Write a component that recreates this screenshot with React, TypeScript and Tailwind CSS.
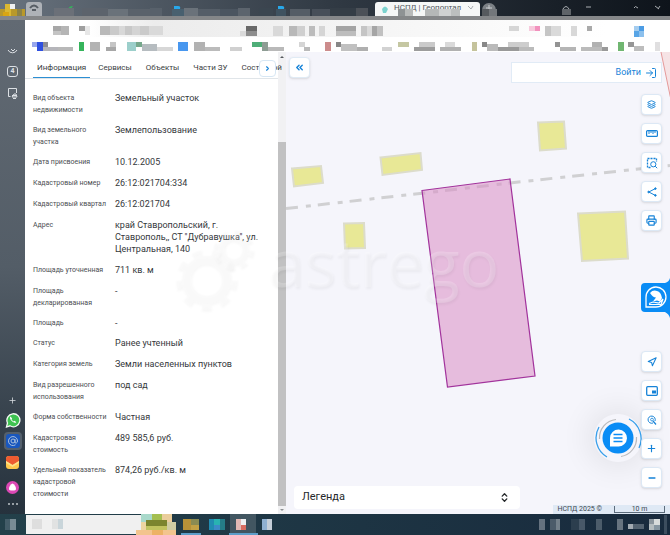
import type { ReactNode } from "react";
import { ChevronRight, ChevronsLeft, ChevronsUpDown, Layers, LogIn, Minus, Navigation, Plus, Printer, Share2 } from "lucide-react";

type Block = [x: number, y: number, w: number, h: number, color: string];

const tabBlocks: Block[] = [
    [0, 9, 25, 7, "#b9992a"], [5, 4, 6, 12, "#dbb832"], [10, 4, 5, 5, "#f0f1f2"], [3, 12, 6, 5, "#d9a512"], [17, 9, 5, 7, "#8c8246"],
    [54, 8, 20, 8, "#6b7078"], [82, 8, 26, 8, "#5c636c"], [108, 9, 20, 7, "#6a727a"], [128, 9, 22, 7, "#5a626b"],
    [150, 8, 12, 8, "#58616b"], [172, 9, 12, 7, "#48606f"], [184, 8, 14, 8, "#6a727a"], [198, 9, 22, 7, "#555e68"], [220, 9, 18, 7, "#4b5560"], [238, 8, 12, 8, "#5c646d"],
    [259, 8, 14, 8, "#3b4650"], [276, 9, 10, 7, "#3f5260"], [290, 9, 20, 7, "#555d66"], [312, 9, 18, 7, "#474f59"], [330, 8, 26, 8, "#343d46"], [356, 8, 12, 8, "#4c5158"],
    [398, 9, 7, 7, "#8e9294"], [405, 9, 8, 7, "#b8baba"], [425, 9, 14, 7, "#b5b8b8"], [439, 9, 12, 7, "#cfd1d1"], [451, 9, 9, 7, "#bcbfbf"],
    [482, 9, 7, 7, "#565a5e"], [489, 9, 8, 7, "#73777b"], [562, 9, 9, 6, "#5e6368"],
];

const toolbarBlocks: Block[] = [
    [53, 26, 8, 5, "#a7a7a7"], [61, 26, 8, 9, "#b5b5b5"], [53, 31, 8, 4, "#c4c4c4"], [79, 26, 6, 5, "#9e9e9e"], [85, 26, 5, 9, "#e7e7e7"],
    [100, 26, 10, 9, "#b9b9b9"], [110, 26, 9, 9, "#cacaca"], [119, 26, 6, 9, "#d8d8d8"], [125, 26, 7, 9, "#c8c8c8"], [132, 26, 8, 9, "#d4d4d4"], [140, 26, 9, 9, "#cacaca"], [149, 26, 14, 9, "#d9d9d9"],
    [240, 31, 6, 5, "#dadada"], [246, 26, 11, 5, "#686868"], [246, 31, 11, 5, "#8d8d8d"], [273, 26, 10, 10, "#d9d9d9"], [289, 26, 8, 10, "#b8b8b8"], [297, 26, 8, 10, "#cfcfcf"], [309, 26, 6, 10, "#bcbcbc"], [319, 26, 6, 10, "#d5d5d5"],
    [336, 26, 20, 5, "#a4a4a4"], [336, 31, 20, 5, "#bdbdbd"], [361, 26, 6, 10, "#c5c5c5"], [367, 26, 5, 10, "#dadada"], [372, 26, 5, 10, "#a5a5a5"], [377, 26, 6, 10, "#c1c1c1"],
    [509, 26, 10, 5, "#d6d6d6"], [529, 26, 6, 5, "#f7cadd"], [535, 26, 5, 5, "#f291bd"], [545, 26, 6, 10, "#c5c5c5"], [551, 26, 10, 10, "#dadada"], [571, 26, 6, 10, "#d8d8d8"], [587, 26, 5, 5, "#aaaaaa"],
    [634, 26, 5, 5, "#a5cdef"], [639, 26, 5, 5, "#4c9ce4"], [634, 31, 5, 6, "#58a5e6"], [639, 31, 5, 6, "#8cc0ed"],
    [32, 42, 5, 5, "#98a7ed"], [37, 42, 6, 9, "#2f50e0"], [43, 42, 5, 5, "#8e8e94"], [43, 47, 15, 4, "#b5b5ba"], [58, 47, 15, 4, "#b8b8b8"], [79, 42, 5, 9, "#35b45b"], [90, 42, 10, 9, "#b3b3b3"], [106, 47, 10, 4, "#a7a7a7"], [110, 42, 6, 5, "#c5c5c5"],
    [127, 42, 9, 9, "#9ccfcb"], [136, 42, 6, 5, "#76a88c"], [142, 44, 15, 7, "#b6bcc0"], [157, 47, 16, 4, "#d7d7d7"], [178, 42, 10, 9, "#4897ef"], [194, 42, 11, 9, "#b2b2b2"], [205, 47, 15, 4, "#bbbbbb"], [230, 47, 12, 4, "#d0d0d0"],
    [252, 42, 10, 5, "#4fae78"], [262, 42, 6, 9, "#8e9d94"], [268, 47, 16, 4, "#b9b9b9"], [299, 42, 6, 5, "#d5d5d5"], [304, 47, 6, 4, "#bababa"], [325, 42, 6, 9, "#cc8c8c"], [336, 42, 5, 5, "#878787"], [341, 44, 16, 7, "#c0c0c0"], [357, 47, 11, 4, "#afafaf"], [382, 47, 10, 4, "#d2d2d2"],
    [398, 42, 11, 5, "#c5c7a2"], [414, 47, 21, 4, "#9c9c9c"], [419, 42, 16, 5, "#cacaca"], [440, 47, 21, 4, "#b1b1b1"], [445, 42, 10, 5, "#dadada"], [472, 42, 5, 9, "#c5c39c"], [482, 42, 5, 5, "#888888"], [487, 44, 11, 7, "#bababa"], [498, 47, 21, 4, "#999999"], [508, 42, 21, 5, "#cdcdcd"], [519, 47, 15, 4, "#bbbbbb"],
    [555, 42, 5, 5, "#939393"], [560, 47, 16, 4, "#b5b5b5"], [581, 47, 21, 4, "#bbbbbb"], [592, 42, 10, 5, "#b1b1b1"], [602, 47, 6, 4, "#999999"], [618, 42, 6, 9, "#70b671"], [628, 42, 6, 5, "#969696"], [634, 46, 10, 5, "#bdbdbd"], [655, 42, 5, 9, "#e0dfe0"],
];

const taskbarBlocks: Block[] = [
    [5, 5, 5, 11, "#435c68"], [10, 5, 6, 11, "#788b94"], [26, 1, 115, 19, "#f0f0f0"], [32, 5, 10, 10, "#dedede"], [52, 5, 6, 10, "#e1e2e2"], [58, 5, 5, 10, "#c9d5da"],
    [136, 16, 40, 5, "#f3c48e"], [141, 0, 11, 8, "#a9d9cb"], [152, 0, 10, 6, "#a4bf51"], [162, 0, 10, 8, "#eacd9b"], [146, 6, 21, 6, "#7b852e"], [141, 8, 5, 8, "#eed5a0"], [146, 12, 21, 4, "#c1c35e"], [167, 8, 9, 8, "#cecca3"], [152, 16, 11, 5, "#edb265"],
    [183, 5, 8, 11, "#b69138"], [191, 5, 8, 6, "#8a8b52"], [191, 11, 8, 5, "#c2a145"], [209, 5, 5, 11, "#218cb1"], [214, 5, 6, 6, "#29b3b2"], [214, 11, 6, 5, "#3c8bc8"], [220, 5, 5, 11, "#257c87"],
    [230, 0, 26, 21, "#425661"], [236, 5, 5, 11, "#e2b8b4"], [241, 5, 5, 6, "#eef0f1"], [241, 11, 5, 5, "#d86c60"], [262, 5, 5, 11, "#8fb0d1"], [267, 5, 5, 11, "#c5ced8"],
    [181, 19, 20, 2, "#5d9ec9"], [229, 19, 29, 2, "#5d9ec9"],
];

const trayBlocks: Block[] = [
    [9, 5, 6, 11, "#65727f"], [20, 5, 6, 11, "#4c5b6a"], [26, 5, 4, 11, "#74808b"], [41, 5, 8, 11, "#2c3e4e"], [49, 5, 6, 11, "#485868"], [66, 5, 6, 11, "#4c5c6a"],
    [87, 5, 6, 11, "#677480"], [98, 10, 5, 5, "#a3abb2"], [103, 10, 11, 5, "#546371"], [119, 5, 5, 5, "#8b969e"], [124, 5, 6, 6, "#d8dcdc"], [119, 10, 5, 6, "#b5bdc0"], [124, 11, 6, 5, "#8797a2"], [134, 1, 3, 19, "#3c4d5e"],
];

const tabs = ["Информация", "Сервисы", "Объекты", "Части ЗУ", "Составной"];

const details = [
    { label: "Вид объекта недвижимости", value: "Земельный участок" },
    { label: "Вид земельного участка", value: "Землепользование" },
    { label: "Дата присвоения", value: "10.12.2005" },
    { label: "Кадастровый номер", value: "26:12:021704:334" },
    { label: "Кадастровый квартал", value: "26:12:021704" },
    { label: "Адрес", value: "край Ставропольский, г. Ставрополь,, СТ \"Дубравушка\", ул. Центральная, 140" },
    { label: "Площадь уточненная", value: "711 кв. м" },
    { label: "Площадь декларированная", value: "-" },
    { label: "Площадь", value: "-" },
    { label: "Статус", value: "Ранее учтенный" },
    { label: "Категория земель", value: "Земли населенных пунктов" },
    { label: "Вид разрешенного использования", value: "под сад" },
    { label: "Форма собственности", value: "Частная" },
    { label: "Кадастровая стоимость", value: "489 585,6 руб." },
    { label: "Удельный показатель кадастровой стоимости", value: "874,26 руб./кв. м" },
];

function Mosaic({ blocks, box, className }: { blocks: Block[]; box: string; className: string }) {
    return (
        <svg className={className} viewBox={box} preserveAspectRatio="none" shapeRendering="crispEdges" aria-hidden="true">
            {blocks.map(([x, y, w, h, color], index) => (
                <rect key={index} x={x} y={y} width={w} height={h} fill={color} />
            ))}
        </svg>
    );
}

function MapButton({ label, children }: { label: string; children: ReactNode }) {
    return (
        <button aria-label={label} className="flex size-[21px] items-center justify-center rounded-sm border border-[#dce8f5] bg-white text-[#1683d8] shadow-sm">
            {children}
        </button>
    );
}

function BrowserTabs() {
    return (
        <header className="relative h-5 shrink-0 overflow-hidden border-b-4 border-[#858789] bg-linear-to-r from-[#69737e] via-[#303943] to-[#0e141b]">
            <svg className="absolute inset-0 size-full" viewBox="0 0 670 16" preserveAspectRatio="none" aria-hidden="true">
                <rect x="26" y="2" width="16" height="18" rx="3" fill="#aeb2b7" />
                <path d="M30 8q4-5 8 0M32 10h4" fill="none" stroke="#575d64" strokeWidth="2" />
                <path d="M68 9q1-3 5-3l-2 3z" fill="#35b45b" />
                <path d="M174 9V6h4q3 0 2 3z" fill="#28a8ea" />
                <path d="M278 9V6h4q3 0 2 3z" fill="#28a8ea" />
                <rect x="375" y="2" width="105" height="18" rx="3" fill="#f5f7f7" />
                <path d="M382 9q3-5 6 0l-2 4h-3z" fill="#7cd3cf" />
                <circle cx="489" cy="10" r="7" fill="#7c8186" />
                <path d="M486 8h6M489 5v6" stroke="#c9cccf" />
                <path d="M563 9q3-5 6 0M586 7h5M634 8q1-3 4 0M655 6l4 3M660 6l-2 3M468 6l3 3M473 6l-2 3" fill="none" stroke="#a9adb1" />
            </svg>
            <span className="absolute left-[394px] top-0.5 text-[8px] leading-3 text-[#50565c]">НСПД | Геопортал</span>
            <Mosaic blocks={tabBlocks} box="0 0 670 16" className="absolute inset-0 size-full" />
        </header>
    );
}

function BrowserSidebar() {
    return (
        <nav className="flex w-[25px] shrink-0 flex-col items-center bg-linear-to-b from-[#626a73] via-[#535d67] to-[#26323d] pt-6 text-[#dce0e4]">
            <svg className="h-5 w-[25px]" viewBox="0 0 25 20" fill="none" stroke="currentColor" aria-hidden="true">
                <path d="M8 6a5 5 0 0 0 9 0M11 5l2 2 2-2" />
            </svg>
            <button aria-label="Открытые вкладки" className="mt-0.5 flex size-[11px] items-center justify-center rounded-[3px] border border-current text-[7px] leading-none font-bold">4</button>
            <svg className="mt-2 h-4 w-[25px]" viewBox="0 0 25 16" fill="none" stroke="currentColor" aria-hidden="true">
                <path d="M10.500 11.500h-2V3.500h8V8" />
                <path d="M12 10.500h5M13 13.500h3M12 12l2-3h2l1 3z" />
            </svg>
            <div className="mt-auto flex flex-col items-center gap-1 pb-1">
                <button aria-label="Добавить" className="flex h-4 items-center"><Plus size={9} strokeWidth={2} /></button>
                <button aria-label="WhatsApp">
                    <svg className="size-4" viewBox="0 0 16 16">
                        <path d="M1.500 15l1-4A6.500 6.500 0 1 1 5 13.800z" fill="#3fc351" stroke="#f4faf5" strokeWidth="1.300" />
                        <path d="M5.500 4.500c-1 .8-.5 2.800 1.300 4.600s3.600 2.200 4.500 1.100l-1.700-1.500-1 .8c-1-.5-1.600-1.200-2.100-2.200l.7-.8z" fill="#fff" />
                    </svg>
                </button>
                <button aria-label="Mail" className="flex size-[18px] items-center justify-center rounded bg-[#54606d]">
                    <svg className="size-3.5" viewBox="0 0 14 14">
                        <rect width="14" height="14" rx="3" fill="#1957be" />
                        <circle cx="7" cy="7" r="2" fill="none" stroke="#a9bfdc" />
                        <path d="M9 5v3q0 1.500 1.300 1T11.500 7A4.500 4.500 0 1 0 9.500 10.800" fill="none" stroke="#a9bfdc" />
                    </svg>
                </button>
                <button aria-label="Почта" className="py-0.5">
                    <svg className="size-[13px]" viewBox="0 0 13 13">
                        <rect width="13" height="13" rx="3" fill="#ffc84c" />
                        <path d="M0 5V3q0-3 3-3h7q3 0 3 3v2L6.500 9z" fill="#ee5b31" />
                        <path d="M0 5l6.500 4L13 5v2l-6.500 4L0 7z" fill="#ffe089" />
                    </svg>
                </button>
                <button aria-label="Алиса" className="pt-1.5">
                    <svg className="size-[13px]" viewBox="0 0 13 13">
                        <circle cx="6.500" cy="6.500" r="6.500" fill="#dc48b4" />
                        <path d="M6.500 2.500C4 3.500 3 6 3 8q0 1.500 3.500 1.500T10 8c0-2-1-4.500-3.500-5.500z" fill="#fff" />
                    </svg>
                </button>
                <button aria-label="Ещё" className="flex h-3 items-center gap-0.5">
                    <i className="size-0.5 rounded-full bg-[#bcc3c9]" /><i className="size-0.5 rounded-full bg-[#bcc3c9]" /><i className="size-0.5 rounded-full bg-[#bcc3c9]" />
                </button>
            </div>
        </nav>
    );
}

function InfoPanel() {
    return (
        <section className="flex w-[261px] shrink-0 bg-white">
            <div className="flex min-w-0 flex-1 flex-col">
                <div className="relative flex h-[27px] shrink-0 items-end border-b border-[#e0e5e9] pl-2">
                    <button className="mr-2 h-5 border-b border-[#2c8fd3] px-1 text-[8px] whitespace-nowrap text-[#3a3e42]">{tabs[0]}</button>
                    <div className="flex gap-3.5">
                        {tabs.slice(1).map((tab) => (
                            <button key={tab} className="h-5 border-b border-transparent text-[8px] whitespace-nowrap text-[#3a3e42]">{tab}</button>
                        ))}
                    </div>
                    <button aria-label="Следующие вкладки" className="absolute right-0.5 bottom-px flex size-[17px] items-center justify-center rounded-sm border border-[#d7e7f4] bg-white text-[#1683d8]">
                        <ChevronRight size={7} strokeWidth={4} />
                    </button>
                </div>
                <dl className="flex flex-col gap-2 pt-[13px] pl-2">
                    {details.map((item) => (
                        <div key={item.label} className="flex">
                            <dt className="w-[82px] shrink-0 pr-2 text-[7px] leading-3 text-[#4b4e52]">{item.label}</dt>
                            <dd className={item.value === "-" ? "flex-1 text-[9px] leading-3 text-[#35383b]" : "flex-1 pr-4 pb-px text-[9px] leading-3 text-[#35383b]"}>{item.value}</dd>
                        </div>
                    ))}
                </dl>
            </div>
            <div className="flex w-2 shrink-0 flex-col items-center bg-[#f1f1f3]" aria-hidden="true">
                <svg className="h-2 w-2" viewBox="0 0 8 8"><path d="M2 6l2-2 2 2z" fill="#55585c" /></svg>
                <div className="mt-[82px] w-full flex-1 bg-[#c1c1c2]" />
                <svg className="h-2 w-2" viewBox="0 0 8 8"><path d="M2 3l2 2 2-2z" fill="#8c8f92" /></svg>
            </div>
        </section>
    );
}

function ParcelMap() {
    return (
        <svg className="absolute inset-0 size-full" viewBox="286 52 384 462" preserveAspectRatio="xMidYMid slice" aria-label="Карта участка">
            <path d="M661 52L670 97V52z" fill="#f6e3e5" />
            <path d="M661 52L671 100" stroke="#e59a9a" fill="none" />
            <g fill="#e8e896" stroke="#dcdccb" strokeWidth="2">
                <path d="M292 168.500L321 166l2 17-29 3.500z" />
                <path d="M380.500 157.500L420.500 153l1.500 17-39.500 5z" />
                <path d="M344 223.500l20-.5 1 25-20 .5z" />
                <path d="M538 122.500l26-1 2 27-26 2z" />
                <path d="M578 213.500L625 211.500l3 47-46 2.500z" />
            </g>
            <path d="M286 208.500L420 193.500L510 183L670 165.500" fill="none" stroke="#d0d0d2" strokeWidth="3" strokeDasharray="12 8 5 7" />
            <path d="M422 190.500L510 179l25 197-87.500 11z" fill="#d98cc4" fillOpacity=".55" stroke="#a2339c" strokeWidth="1.200" />
        </svg>
    );
}

function MapView() {
    return (
        <main className="relative min-w-0 flex-1 overflow-hidden bg-[#f5f5fb]">
            <ParcelMap />
            <button aria-label="Свернуть панель" className="absolute top-[5px] left-[3px] flex size-[21px] items-center justify-center rounded-sm border border-[#e0ebf5] bg-white text-[#1683d8] shadow-sm">
                <ChevronsLeft size={11} strokeWidth={3} />
            </button>
            <div className="absolute top-2.5 right-2 flex h-[21px] w-[151px] items-center justify-end border border-[#e1ebf6] bg-white pr-1">
                <button className="flex items-center gap-1 text-[9px] text-[#1683d8]">
                    Войти
                    <LogIn size={12} strokeWidth={2} />
                </button>
            </div>

            {/* Map tools */}
            <div className="absolute top-[42px] right-2 flex flex-col gap-2">
                <MapButton label="Слои"><Layers size={9} strokeWidth={2.5} /></MapButton>
                <MapButton label="Измерение">
                    <svg width="12" height="7" viewBox="0 0 12 7" fill="none" stroke="currentColor"><rect x=".6" y=".6" width="10.800" height="5.800" rx="1" strokeWidth="1.200" /><path d="M3 1v3M5 1v2M7 1v3M9 1v2" /></svg>
                </MapButton>
                <MapButton label="Поиск в области">
                    <svg width="12" height="12" viewBox="0 0 12 12" fill="none" stroke="currentColor"><path d="M4.500 10.500H1.500v-9h9V5" strokeDasharray="2 1" strokeWidth="1.300" /><circle cx="7.300" cy="7.300" r="2.600" /><path d="M9.200 9.200l2 2" /></svg>
                </MapButton>
                <MapButton label="Поделиться">
                    <svg width="10" height="10" viewBox="0 0 10 10" fill="currentColor" stroke="currentColor"><path d="M8.500 1.500L1.800 5l6.700 3.500" fill="none" /><circle cx="8.400" cy="1.600" r=".8" /><circle cx="1.600" cy="5" r=".8" /><circle cx="8.400" cy="8.400" r=".8" /></svg>
                </MapButton>
                <MapButton label="Печать"><Printer size={11} strokeWidth={2.5} /></MapButton>
            </div>

            {/* Assistant tab */}
            <button aria-label="Помощник" className="absolute top-[226px] right-0">
                <svg className="h-10 w-[29px]" viewBox="0 0 29 40">
                    <path d="M4 5h20q4-1 5-5v40q-1-4-5-6H4q-4 0-4-4V9q0-4 4-4z" fill="#0a8cf5" />
                    <path d="M5 29V19.500A10 10 0 1 1 15 29z" fill="none" stroke="#fff" strokeWidth="1.300" />
                    <path d="M9 15q3-3.500 7-2 4 1 5 7l-2 3.500-3-1-4 1 3-4q-3 0-6-4.500z" fill="#fff" />
                    <path d="M8 25.500l4-1.500 6 1 4-4-2 5.500H8" fill="none" stroke="#fff" strokeWidth="1.200" />
                </svg>
            </button>

            {/* Chat */}
            <button aria-label="Чат" className="absolute right-7 bottom-[52px] rounded-full shadow-[0_0_32px_4px_rgba(0,0,0,0.09)]">
                <svg className="size-12" viewBox="0 0 48 48" fill="none">
                    <circle cx="24" cy="24" r="15.500" fill="#0a8cf5" />
                    <path d="M16 32.500V24a8.500 8.500 0 1 1 8 8.500z" fill="#fff" />
                    <path d="M19.500 20.500h9M19.500 24h9M19.500 27.500h9" stroke="#0a8cf5" strokeWidth="1.400" />
                    <path d="M13 43A22 22 0 0 1 5 13M35 5A22 22 0 0 1 45 34" stroke="#389fea" strokeWidth="1.300" />
                    <path d="M5.500 25A18.500 18.500 0 0 1 22 5.500M42.500 23A18.500 18.500 0 0 1 27 42.500" stroke="#b9babd" strokeWidth="1.200" />
                </svg>
            </button>

            {/* Navigation controls */}
            <div className="absolute right-2 bottom-[26px] flex flex-col gap-2">
                <MapButton label="Моё местоположение"><Navigation size={10} strokeWidth={2.5} /></MapButton>
                <MapButton label="Обзорная карта">
                    <svg width="12" height="10" viewBox="0 0 12 10" fill="none" stroke="currentColor"><rect x=".7" y=".7" width="10.600" height="8.600" rx="1" strokeWidth="1.300" /><rect x="6" y="4.500" width="4" height="3" fill="currentColor" stroke="none" /></svg>
                </MapButton>
                <MapButton label="Найти на карте">
                    <svg width="10" height="10" viewBox="0 0 10 10" fill="none" stroke="currentColor"><path d="M6 8a3.600 3.600 0 1 1 2-2" /><path d="M6 6l3 3.500" strokeWidth="1.200" /><circle cx="5" cy="4.600" r="1.400" strokeWidth=".8" /></svg>
                </MapButton>
                <MapButton label="Приблизить"><Plus size={11} strokeWidth={2.5} /></MapButton>
                <MapButton label="Отдалить"><Minus size={10} strokeWidth={3.5} /></MapButton>
            </div>

            <button className="absolute bottom-[5px] left-2 flex h-[23px] w-[226px] items-center justify-between rounded-sm bg-white pr-2.5 pl-2 text-[11px] text-[#25282b]">
                Легенда
                <ChevronsUpDown size={11} strokeWidth={3} />
            </button>

            <div className="absolute right-0 bottom-0 flex h-[9px] items-center gap-3 bg-[#dfe9f5] pr-[5px] pl-1 text-[7px] leading-[9px] text-[#3c4650]">
                <span>НСПД 2025 ©</span>
                <span className="h-[7px] w-[51px] border-x border-b border-[#5c6c7c] text-center leading-[7px]">10 m</span>
            </div>
        </main>
    );
}

function Watermark() {
    return (
        <div className="pointer-events-none absolute top-[199px] left-[145px] flex items-start drop-shadow-[1px_2px_1px_rgba(0,0,0,0.2)]" aria-hidden="true">
            <svg className="mt-1 h-[92px] w-[90px] shrink-0" viewBox="0 0 90 92" fill="none" stroke="#fff" strokeOpacity=".15">
                <circle cx="36" cy="56" r="20" strokeWidth="10" />
                <circle cx="36" cy="56" r="28" strokeWidth="6" strokeDasharray="9.770 9.770" />
                <circle cx="63" cy="26" r="12" strokeWidth="7" />
                <circle cx="63" cy="26" r="18" strokeWidth="5" strokeDasharray="7.070 7.070" />
            </svg>
            <span className="pl-2 font-['Open_Sans',sans-serif] text-[66px] leading-[84px] font-medium text-white/20">astrego</span>
        </div>
    );
}

export default function App() {
    return (
        <div className="flex h-screen flex-col overflow-hidden font-[Roboto,sans-serif]">
            <BrowserTabs />
            <div className="flex min-h-0 flex-1">
                <BrowserSidebar />
                <div className="relative flex min-w-0 flex-1 flex-col bg-white">
                    <div className="h-8 shrink-0 bg-white">
                        <div className="h-[17px] bg-linear-to-r from-white from-10% via-[#ececec] via-20% to-white to-90%" />
                        <Mosaic blocks={toolbarBlocks} box="25 20 645 32" className="-mt-[17px] h-8 w-full" />
                    </div>
                    <div className="flex min-h-0 flex-1">
                        <InfoPanel />
                        <MapView />
                    </div>
                    <Watermark />
                </div>
            </div>
            <footer className="flex h-[21px] shrink-0 justify-between bg-linear-to-r from-[#23404a] to-[#182a3d]">
                <Mosaic blocks={taskbarBlocks} box="0 0 280 21" className="h-[21px] w-[280px]" />
                <Mosaic blocks={trayBlocks} box="0 0 140 21" className="h-[21px] w-[140px]" />
            </footer>
        </div>
    );
}
